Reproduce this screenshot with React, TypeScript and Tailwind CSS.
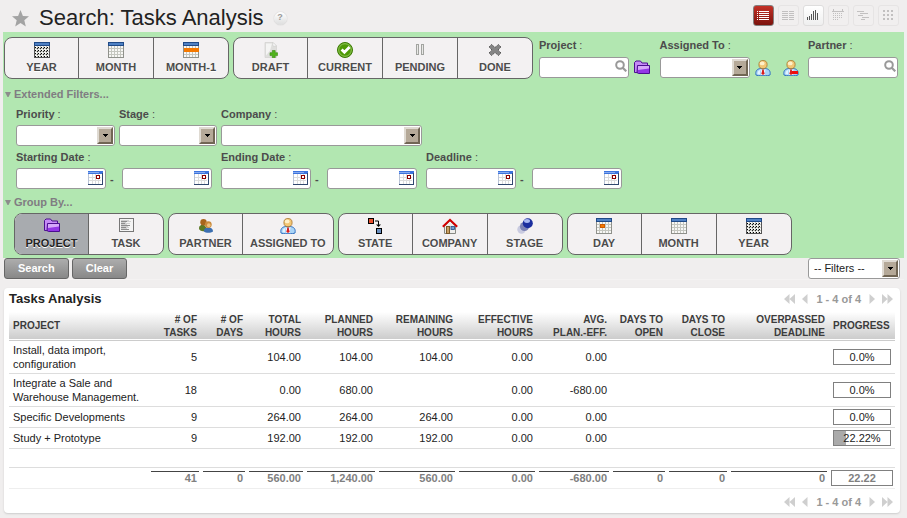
import React from "react";

type IconName =
  | "year" | "month" | "month1" | "day" | "draft" | "current" | "pending" | "done"
  | "folder" | "task" | "partner" | "person" | "personMinus" | "state" | "company" | "stage";

function CalendarGrid({ variant }: { variant: "year" | "month" | "month1" | "day" }) {
  const lines = [3, 6, 9, 12];
  const rows = [6, 9, 12];
  return (
    <g shapeRendering="crispEdges">
      <rect x="0" y="0" width="16" height="16" fill="#8f918b" />
      <rect x="1" y="4" width="14" height="11" fill="#f7f7f5" />
      {variant !== "year" && lines.map((x) => <rect key={"v" + x} x={x} y="4" width="1" height="11" fill="#c4c6bf" />)}
      {variant !== "year" && rows.map((y) => <rect key={"h" + y} x="1" y={y} width="14" height="1" fill="#c4c6bf" />)}
      <rect x="0" y="0" width="16" height="4" fill="#204a87" />
      <rect x="1" y="1" width="14" height="2" fill="#4f81c4" />
      {variant === "year" && (
        <g>
          <path d="M0 4h1v12H0zM15 4h1v12h-1zM0 15h16v1H0z" fill="#555" />
          {[6, 9, 12].map((y) => <rect key={"r" + y} x="1" y={y} width="14" height="1" fill="#c4c6bf" />)}
          {[3, 6, 9, 12].map((x) => <rect key={"c" + x} x={x} y="4" width="1" height="11" fill="#c4c6bf" />)}
          {[5, 8, 11, 14].map((y) =>
            [2, 5, 8, 11, 14].map((x) => (
              <rect key={x + "-" + y} x={x - 1} y={y} width="1" height="1" fill="#000" />
            ))
          )}
          {[6, 9, 12].map((y) =>
            [3, 6, 9, 12].map((x) => (
              <rect key={"b" + x + "-" + y} x={x} y={y} width="1" height="1" fill="#222" />
            ))
          )}
        </g>
      )}
      {variant === "month1" && <rect x="1" y="6" width="15" height="4" fill="#f57900" />}
      {variant === "day" && (
        <g>
          <rect x="4" y="6" width="5" height="4" fill="#ce5c00" />
          <rect x="5" y="7" width="3" height="2" fill="#f57900" />
        </g>
      )}
    </g>
  );
}

function Person() {
  return (
    <g>
      <path d="M1 15c-.8-4 1-6 4.500-6.500h5C14 9 15.800 11 15 15c-1 1-13 1-14 0z" fill="#a9d4f7" stroke="#2f6fc0" />
      <path d="M2.500 14c0-2.500 1-3.500 2.500-4v4.500z" fill="#e3f3ff" />
      <path d="M5.500 9L8 11.500 10.500 9l-.8 6H6.300z" fill="#f2f8ff" />
      <path d="M7 9.500h2l-.2 1.200.9 3L8 15l-1.700-1.300.9-3z" fill="#d81e1e" />
      <circle cx="8" cy="4.600" r="4.100" fill="#f3c776" stroke="#a8752b" strokeWidth=".8" />
      <ellipse cx="7.200" cy="3.400" rx="2.400" ry="1.900" fill="#fff0c9" />
    </g>
  );
}

function Icon({ name }: { name: IconName }) {
  return (
    <svg width="16" height="16" viewBox="0 0 16 16" aria-hidden="true" className="block shrink-0">
      {(name === "year" || name === "month" || name === "month1" || name === "day") && <CalendarGrid variant={name} />}
      {name === "draft" && (
        <g>
          <path d="M2 .5h8l3.500 3.500v11.500H2z" fill="#dededc" stroke="#d4d4d2" strokeWidth=".8" />
          <path d="M3 1.500h6l-2 7-4 5z" fill="#f4f4f3" />
          <path d="M10 .5V4h3.500z" fill="#fff" stroke="#cfcfcd" strokeWidth=".6" />
          <path d="M9.300 8.500h2.900v2.200h2.300v2.900h-2.300v2.200H9.300v-2.200H7v-2.900h2.300z" fill="#4fb31c" stroke="#388a10" strokeWidth=".6" />
        </g>
      )}
      {name === "current" && (
        <g>
          <circle cx="8" cy="8" r="7.500" fill="#4e9a06" stroke="#3c7a05" />
          <circle cx="8" cy="8" r="6.300" fill="none" stroke="#a3cf72" strokeWidth=".8" />
          <path d="M4.600 7.400l2.800 2.800L12.600 5" fill="none" stroke="#fff" strokeWidth="2.800" />
        </g>
      )}
      {name === "pending" && (
        <g fill="#e8e8e6" stroke="#a2a4a0" shapeRendering="crispEdges">
          <rect x="4.500" y="2.500" width="2" height="10" />
          <rect x="9.500" y="2.500" width="2" height="10" />
        </g>
      )}
      {name === "done" && (
        <g>
          <path d="M4.500 2.500L8 5.500l3.500-3 2.500 2.500-3 3 3 3-2.500 2.500-3.500-3-3.500 3L2 11l3-3-3-3z" fill="#858585" stroke="#555" strokeDasharray="1.500 .7" />
        </g>
      )}
      {name === "folder" && (
        <g>
          <path d="M.5 12.500V2.500L2 1h4.500l1.500 2h5.500v10z" fill="#c58bf5" stroke="#4b0f8f" />
          <path d="M3.500 5.500h12v8H4.500L3 12.500z" fill="#9336e6" stroke="#4b0f8f" />
          <path d="M4 6h11v2.500L4 10z" fill="#d5a8fa" />
        </g>
      )}
      {name === "task" && (
        <g shapeRendering="crispEdges">
          <rect x="1" y="0" width="15" height="14" fill="#777" />
          <rect x="2" y="1" width="13" height="12" fill="#f4f4f4" />
          <path d="M3 3h6v1H3zM3 5h4v1H3zM3 7h9v1H3zM3 9h5v1H3zM3 11h8v1H3z" fill="#8d8d8d" />
          <path d="M3 2h8v1H3zM3 4h5v1H3zM3 6h6v1H3zM3 8h7v1H3zM3 10h6v1H3zM9 3h4v1H9zM7 5h5v1H7zM8 9h3v1H8z" fill="#cfcfcf" />
        </g>
      )}
      {name === "partner" && (
        <g>
          <path d="M1 10.500C.8 7.500 3 6.500 6 6.800l3 3.700-2 2.500C4 13.500 1.500 13 1 10.500z" fill="#5c7a25" />
          <circle cx="5.500" cy="4.200" r="3.200" fill="#a8651c" />
          <path d="M5.800 13.500c0-2.800 1.500-4 4.500-4s4.700 1.200 4.700 4c-2 1.800-7.500 1.800-9.200 0z" fill="#3c6fb0" />
          <circle cx="10.300" cy="6.600" r="3.400" fill="#c98a3c" />
          <ellipse cx="10.800" cy="7.200" rx="1.800" ry="2" fill="#efc07d" />
        </g>
      )}
      {(name === "person" || name === "personMinus") && <Person />}
      {name === "personMinus" && <rect x="9" y="11" width="6" height="3" fill="#f20d0d" shapeRendering="crispEdges" />}
      {name === "state" && (
        <g>
          <rect x="1.500" y=".5" width="5" height="5" fill="#e8502f" stroke="#000" />
          <rect x="9.500" y="10.500" width="5" height="5" fill="#6a8fc0" stroke="#000" />
          <path d="M8 3h3.500v5" fill="none" stroke="#000" />
          <path d="M9 6.500h5L11.500 9z" fill="#000" />
        </g>
      )}
      {name === "company" && (
        <g>
          <path d="M2.500 8L8 3l5.500 5v7.500h-11z" fill="#eeeeec" stroke="#888a85" />
          <rect x="4.500" y="8.500" width="3" height="7" fill="#c9a065" stroke="#7a5a2a" />
          <rect x="9" y="8.500" width="3.500" height="3" fill="#729fcf" stroke="#204a87" strokeWidth=".8" />
          <path d="M.8 8.800L8 1.800l7.200 7" fill="none" stroke="#d40000" strokeWidth="2" />
        </g>
      )}
      {name === "stage" && (
        <g>
          <circle cx="4.500" cy="11.500" r="4.200" fill="#c9cbe0" />
          <circle cx="7.500" cy="8.500" r="4.600" fill="#7c83b5" />
          <circle cx="10.800" cy="5.200" r="5" fill="#1b2e9e" />
          <ellipse cx="10" cy="3" rx="3" ry="1.900" fill="#a9b9f2" />
        </g>
      )}
    </svg>
  );
}

type Item = { label: string; icon: IconName; active?: boolean };

function ButtonGroup({ items }: { items: Item[] }) {
  return (
    <div className="flex shrink-0 overflow-hidden rounded-lg border border-[#666] bg-[#f3f1f2]">
      {items.map((it, i) => (
        <button
          key={it.label}
          type="button"
          aria-pressed={!!it.active}
          className={
            "flex flex-col items-center gap-[3px] px-[7px] py-1 text-[11px] leading-[13px] font-bold text-shadow-[0_1px_0_#fff] " +
            (i === 0 ? "min-w-[73px] " : "min-w-[75px] border-l border-[#666] ") +
            (it.active ? "bg-[#a8abaf] text-[#222]" : "text-[#4c4c4c]")
          }
        >
          <Icon name={it.icon} />
          {it.label}
        </button>
      ))}
    </div>
  );
}

function FieldLabel({ htmlFor, children }: { htmlFor: string; children: React.ReactNode }) {
  return (
    <label htmlFor={htmlFor} className="block text-[11px] leading-[14px] text-[#4c4c4c]">
      <b>{children}</b> :
    </label>
  );
}

function SelectBox({ id, width, options = [""], label }: { id: string; width: string; options?: string[]; label?: string }) {
  return (
    <div className={"relative h-[21px] shrink-0 " + width}>
      <select id={id} aria-label={label} className="block h-full w-full appearance-none rounded-[3px] border border-[#999] bg-white pl-[5px] text-[11px] text-[#222]">
        {options.map((o) => <option key={o}>{o}</option>)}
      </select>
      <span className="pointer-events-none absolute inset-y-[2px] right-[2px] flex w-4 items-center justify-center border-2 border-t-[#dfdad2] border-r-[#716654] border-b-[#716654] border-l-[#dfdad2] bg-[#b5a998]">
        <svg width="5" height="3" viewBox="0 0 5 3" aria-hidden="true" shapeRendering="crispEdges">
          <path d="M0 0h5v1H4v1H3v1H2V2H1V1H0z" fill="#000" />
        </svg>
      </span>
    </div>
  );
}

function SearchInput({ id }: { id: string }) {
  return (
    <div className="flex h-[21px] w-[90px] shrink-0 items-center rounded-[3px] border border-[#999] bg-white">
      <input id={id} type="text" className="h-full min-w-0 flex-1 bg-transparent px-1 text-[11px] outline-none" />
      <button type="button" aria-label="Look up" className="mr-px mb-[3px]">
        <svg width="12" height="12" viewBox="0 0 12 12" fill="none" stroke="#999" aria-hidden="true">
          <circle cx="5" cy="5" r="3.800" strokeWidth="2" />
          <path d="M7.500 7.500l3.800 3.800" strokeWidth="2.200" />
        </svg>
      </button>
    </div>
  );
}

function DateInput({ id, label }: { id: string; label?: string }) {
  return (
    <div className="flex h-[21px] w-[90px] shrink-0 items-center rounded-[3px] border border-[#999] bg-white">
      <input id={id} aria-label={label} type="text" className="h-full min-w-0 flex-1 bg-transparent px-1 text-[11px] outline-none" />
      <button type="button" aria-label="Pick a date" className="mr-[2px] mb-px">
        <svg width="15" height="14" viewBox="0 0 15 14" shapeRendering="crispEdges" className="block" aria-hidden="true">
          <rect width="15" height="14" fill="#b9c3d6" />
          <rect x="1" y="3" width="13" height="10" fill="#fff" />
          <path d="M1 6h12v1H1zM1 9h12v1H1zM4 3h1v10H4zM7 3h1v10H7zM10 3h1v10h-1z" fill="#dcdcdc" />
          <rect width="15" height="3" fill="#3d74dd" />
          <rect y="1" width="11" height="1" fill="#86abf0" />
          <path d="M14 2h1v12H0v-1h14z" fill="#31486f" />
          <rect x="8" y="4" width="4" height="4" fill="#8b0000" />
          <rect x="9" y="5" width="2" height="2" fill="#fff" />
        </svg>
      </button>
    </div>
  );
}

function DateRange({ id, label }: { id: string; label: string }) {
  return (
    <div className="flex w-[196px] flex-col gap-1">
      <FieldLabel htmlFor={id}>{label}</FieldLabel>
      <div className="flex items-center">
        <DateInput id={id} />
        <span className="ml-1 flex-1 text-[11px] leading-[14px] font-bold text-[#4c4c4c]">-</span>
        <DateInput id={id + "-to"} label={label + " until"} />
      </div>
    </div>
  );
}

function SectionToggle({ children }: { children: React.ReactNode }) {
  return (
    <button type="button" aria-expanded="true" className="flex items-center gap-[3px] pl-px text-[11px] leading-[14px] font-bold text-[#807c82]">
      <svg width="6" height="5" viewBox="0 0 6 5" aria-hidden="true"><path d="M0 0h6L3.500 5h-1z" fill="#8c8c8c" /></svg>
      {children}
    </button>
  );
}

const views: { name: string; art: string; tone: string }[] = [
  { name: "List", art: "M4 6h1v1H4zM6 6h10v1H6zM4 8h1v1H4zM6 8h10v1H6zM4 10h1v1H4zM6 10h10v1H6zM4 12h1v1H4zM6 12h10v1H6zM4 14h1v1H4zM6 14h10v1H6z", tone: "red" },
  { name: "Form", art: "M4 6h6v1H4zM11 6h5v1h-5zM4 8h6v1H4zM11 8h5v1h-5zM4 10h6v1H4zM11 10h5v1h-5zM4 12h6v1H4zM11 12h5v1h-5zM4 14h6v1H4zM11 14h5v1h-5z", tone: "off" },
  { name: "Graph", art: "M4 12h1v3H4zM6 11h1v4H6zM8 9h1v6H8zM10 6h1v9h-1zM12 5h1v10h-1zM14 8h1v7h-1z", tone: "on" },
  { name: "Calendar", art: "M5 4h1v2H5zM14 4h1v2h-1zM4 6h12v1H4zM5 8h1v1H5zM7 8h1v1H7zM9 8h1v1H9zM11 8h1v1h-1zM13 8h1v1h-1zM5 10h1v1H5zM7 10h1v1H7zM9 10h1v1H9zM11 10h1v1h-1zM13 10h1v1h-1zM5 12h1v1H5zM7 12h1v1H7zM9 12h1v1H9zM11 12h1v1h-1zM13 12h1v1h-1zM5 14h1v1H5zM7 14h1v1H7zM9 14h1v1H9z", tone: "off" },
  { name: "Gantt", art: "M4 6h7v1H4zM7 8h8v1H7zM5 10h5v1H5zM9 12h7v1H9zM8 14h4v1H8z", tone: "off" },
  { name: "Kanban", art: "M5 5h2v2H5zM9 5h2v2H9zM13 5h2v2h-2zM5 9h2v2H5zM9 9h2v2H9zM13 9h2v2h-2zM5 13h2v2H5zM9 13h2v2H9zM13 13h2v2h-2z", tone: "off" },
];

function ViewButton({ name, art, tone }: { name: string; art: string; tone: string }) {
  const look =
    tone === "red"
      ? "border-[#84807f] bg-linear-to-b from-[#c43127] to-[#7b120c] text-white"
      : tone === "on"
        ? "border-[#dedddd] bg-linear-to-b from-white to-[#efefef] text-[#555]"
        : "border-[#e6e4e4] bg-[#f1efef] text-[#c2c0c0]";
  return (
    <button type="button" aria-label={name} className={"flex size-[21px] items-center justify-center rounded-[3px] border " + look}>
      <svg width="19" height="19" viewBox="1 1 19 19" fill="currentColor" shapeRendering="crispEdges" aria-hidden="true" className="shrink-0"><path d={art} /></svg>
    </button>
  );
}

function PagerArrow({ label, double, flip }: { label: string; double?: boolean; flip?: boolean }) {
  const w = double ? 11 : 6;
  return (
    <button type="button" aria-label={label}>
      <svg width={w} height="10" viewBox={"0 0 " + w + " 10"} fill="#cfcfcf" className={"block " + (flip ? "-scale-x-100" : "")} aria-hidden="true">
        <path d={double ? "M5.500 0v10L0 5zM11 0v10L5.500 5z" : "M5.500 0v10L0 5z"} />
      </svg>
    </button>
  );
}

function Pager() {
  return (
    <div className="flex items-center gap-[7px] text-[11px] leading-[14px] font-bold text-[#999]">
      <PagerArrow label="First page" double />
      <PagerArrow label="Previous page" />
      <span className="px-px">1 - 4 of 4</span>
      <PagerArrow label="Next page" flip />
      <PagerArrow label="Last page" double flip />
    </div>
  );
}

const columns: { title: [string, string]; width: string }[] = [
  { title: ["# OF", "TASKS"], width: "w-[52px]" },
  { title: ["# OF", "DAYS"], width: "w-[46px]" },
  { title: ["TOTAL", "HOURS"], width: "w-[58px]" },
  { title: ["PLANNED", "HOURS"], width: "w-[72px]" },
  { title: ["REMAINING", "HOURS"], width: "w-[80px]" },
  { title: ["EFFECTIVE", "HOURS"], width: "w-[80px]" },
  { title: ["AVG.", "PLAN.-EFF."], width: "w-[74px]" },
  { title: ["DAYS TO", "OPEN"], width: "w-[56px]" },
  { title: ["DAYS TO", "CLOSE"], width: "w-[62px]" },
  { title: ["OVERPASSED", "DEADLINE"], width: "w-[100px]" },
];

const rows: { project: string; values: string[]; progress: number; text: string }[] = [
  { project: "Install, data import, configuration", values: ["5", "", "104.00", "104.00", "104.00", "0.00", "0.00", "", "", ""], progress: 0, text: "0.0%" },
  { project: "Integrate a Sale and Warehouse Management.", values: ["18", "", "0.00", "680.00", "", "0.00", "-680.00", "", "", ""], progress: 0, text: "0.0%" },
  { project: "Specific Developments", values: ["9", "", "264.00", "264.00", "264.00", "0.00", "0.00", "", "", ""], progress: 0, text: "0.0%" },
  { project: "Study + Prototype", values: ["9", "", "192.00", "192.00", "192.00", "0.00", "0.00", "", "", ""], progress: 22.22, text: "22.22%" },
];

const totals = ["41", "0", "560.00", "1,240.00", "560.00", "0.00", "-680.00", "0", "0", "0"];

function ResultsTable() {
  return (
    <table className="w-full table-fixed border-collapse text-[11px] leading-[14px] text-[#222]">
      <colgroup>
        <col className="w-[140px]" />
        {columns.map((c) => <col key={c.title.join(" ")} className={c.width} />)}
        <col className="w-[66px]" />
      </colgroup>
      <thead>
        <tr className="h-[28px] border-b border-[#ccc] bg-linear-to-b from-white to-[#ccc] text-[10px] leading-[13px] text-[#3c3c3c]">
          <th scope="col" className="px-1 text-left">PROJECT</th>
          {columns.map((c) => (
            <th key={c.title.join(" ")} scope="col" className="pr-1 text-right whitespace-nowrap">
              {c.title[0]}<br />{c.title[1]}
            </th>
          ))}
          <th scope="col" className="px-1 text-left">PROGRESS</th>
        </tr>
      </thead>
      <tbody>
        {rows.map((r) => (
          <tr key={r.project} className="border-b border-[#ddd]">
            <td className="px-1 py-[2px]">{r.project}</td>
            {r.values.map((v, i) => <td key={i} className="px-1 py-[2px] text-right">{v}</td>)}
            <td className="px-1 py-[2px]">
              <div className="relative h-4 border border-[#808080] text-center">
                <div className="absolute inset-y-0 left-0 bg-[#aaa]" style={{ width: r.progress + "%" }} />
                <span className="relative">{r.text}</span>
              </div>
            </td>
          </tr>
        ))}
        <tr className="h-[19px] border-b border-[#ddd]">
          <td colSpan={12} />
        </tr>
      </tbody>
      <tfoot>
        <tr className="border-b border-[#eee] font-bold text-[#808080]">
          <td />
          {totals.map((t, i) => (
            <td key={i} className="px-[2px] text-right">
              <div className="border-t border-[#444] pr-[2px] leading-[13px]">{t}</div>
            </td>
          ))}
          <td className="px-[2px] py-[2px]">
            <div className="h-4 border border-[#808080] text-center">22.22</div>
          </td>
        </tr>
      </tfoot>
    </table>
  );
}

export default function App() {
  return (
    <div className="min-h-screen bg-[#f0eeee] px-[3px] pb-1 font-['Liberation_Sans',Arial,sans-serif]">
      <header className="flex h-8 items-center justify-between pr-[5px] pl-[9px]">
        <div className="flex items-center pt-1">
          <svg width="17" height="17" viewBox="0 0 17 17" fill="#a3a3a3" aria-hidden="true">
            <path d="M8.500 0l2.400 5.900 6.100.4-4.700 4 1.500 6.200-5.300-3.400-5.300 3.400 1.500-6.200L0 6.300l6.100-.4z" />
          </svg>
          <h1 className="ml-[10px] text-[22px] leading-7 text-[#222]">Search: Tasks Analysis</h1>
          <button type="button" aria-label="Help" className="ml-[10px] flex size-[13px] items-center justify-center rounded-full bg-linear-to-b from-white to-[#ddd] text-[9px] font-bold text-[#999] shadow-[0_0_1px_#aaa]">?</button>
        </div>
        <nav className="flex gap-1 pb-px">
          {views.map((v) => <ViewButton key={v.name} {...v} />)}
        </nav>
      </header>

      <form onSubmit={(e) => e.preventDefault()}>
        <div className="bg-[#b2e7b1] px-px pt-[5px] pb-[3px]">
          <div className="flex items-center gap-1">
            <ButtonGroup items={[{ label: "YEAR", icon: "year" }, { label: "MONTH", icon: "month" }, { label: "MONTH-1", icon: "month1" }]} />
            <ButtonGroup items={[{ label: "DRAFT", icon: "draft" }, { label: "CURRENT", icon: "current" }, { label: "PENDING", icon: "pending" }, { label: "DONE", icon: "done" }]} />
            <div className="flex flex-1 justify-between pr-[5px] pl-[2px]">
              <div className="flex flex-col gap-[5px]">
                <FieldLabel htmlFor="project">Project</FieldLabel>
                <div className="flex items-center gap-[5px]">
                  <SearchInput id="project" />
                  <button type="button" aria-label="My projects"><Icon name="folder" /></button>
                </div>
              </div>
              <div className="flex flex-col gap-[5px]">
                <FieldLabel htmlFor="assigned">Assigned To</FieldLabel>
                <div className="flex items-center">
                  <SelectBox id="assigned" width="w-[90px]" />
                  <button type="button" aria-label="My tasks" className="ml-[5px]"><Icon name="person" /></button>
                  <button type="button" aria-label="Unassigned tasks" className="ml-3"><Icon name="personMinus" /></button>
                </div>
              </div>
              <div className="flex flex-col gap-[5px]">
                <FieldLabel htmlFor="partner">Partner</FieldLabel>
                <SearchInput id="partner" />
              </div>
            </div>
          </div>

          <div className="mt-2"><SectionToggle>Extended Filters...</SectionToggle></div>
          <div className="mt-[6px] flex flex-wrap gap-1 pl-3">
            <div className="flex flex-col gap-1">
              <FieldLabel htmlFor="priority">Priority</FieldLabel>
              <SelectBox id="priority" width="w-[99px]" />
            </div>
            <div className="flex flex-col gap-1">
              <FieldLabel htmlFor="stage">Stage</FieldLabel>
              <SelectBox id="stage" width="w-[98px]" />
            </div>
            <div className="flex flex-col gap-1">
              <FieldLabel htmlFor="company">Company</FieldLabel>
              <SelectBox id="company" width="w-[201px]" />
            </div>
          </div>
          <div className="mt-1 flex flex-wrap gap-x-[9px] gap-y-1 pl-3">
            <DateRange id="start" label="Starting Date" />
            <DateRange id="end" label="Ending Date" />
            <DateRange id="deadline" label="Deadline" />
          </div>

          <div className="mt-[6px]"><SectionToggle>Group By...</SectionToggle></div>
          <div className="mt-1 flex flex-wrap gap-1 pl-[10px]">
            <ButtonGroup items={[{ label: "PROJECT", icon: "folder", active: true }, { label: "TASK", icon: "task" }]} />
            <ButtonGroup items={[{ label: "PARTNER", icon: "partner" }, { label: "ASSIGNED TO", icon: "person" }]} />
            <ButtonGroup items={[{ label: "STATE", icon: "state" }, { label: "COMPANY", icon: "company" }, { label: "STAGE", icon: "stage" }]} />
            <ButtonGroup items={[{ label: "DAY", icon: "day" }, { label: "MONTH", icon: "month" }, { label: "YEAR", icon: "year" }]} />
          </div>
        </div>

        <div className="flex gap-[3px] border-b border-[#f4f2f2] pr-1 pl-px text-[11px] font-bold text-white text-shadow-[0_1px_1px_#555]">
          <button type="submit" className="h-[21px] rounded-[3px] border border-[#666] bg-linear-to-b from-[#adadad] to-[#888] px-[13px]">Search</button>
          <button type="reset" className="h-[21px] rounded-[3px] border border-[#666] bg-linear-to-b from-[#adadad] to-[#888] px-[13px]">Clear</button>
          <div className="ml-auto font-normal text-shadow-none">
            <SelectBox id="filters" label="Filters" width="w-[92px]" options={["-- Filters --"]} />
          </div>
        </div>
      </form>

      <section className="mt-2 mr-1 ml-px rounded-[4px] bg-white px-[5px] shadow-[0_1px_2px_#ccc]">
        <div className="flex h-6 items-center justify-between pr-[2px] pb-[2px]">
          <h2 className="text-[13px] leading-[14px] font-bold text-[#222]">Tasks Analysis</h2>
          <Pager />
        </div>
        <ResultsTable />
        <div className="flex h-6 items-center justify-end pt-[2px] pr-[2px]">
          <Pager />
        </div>
      </section>
    </div>
  );
}
